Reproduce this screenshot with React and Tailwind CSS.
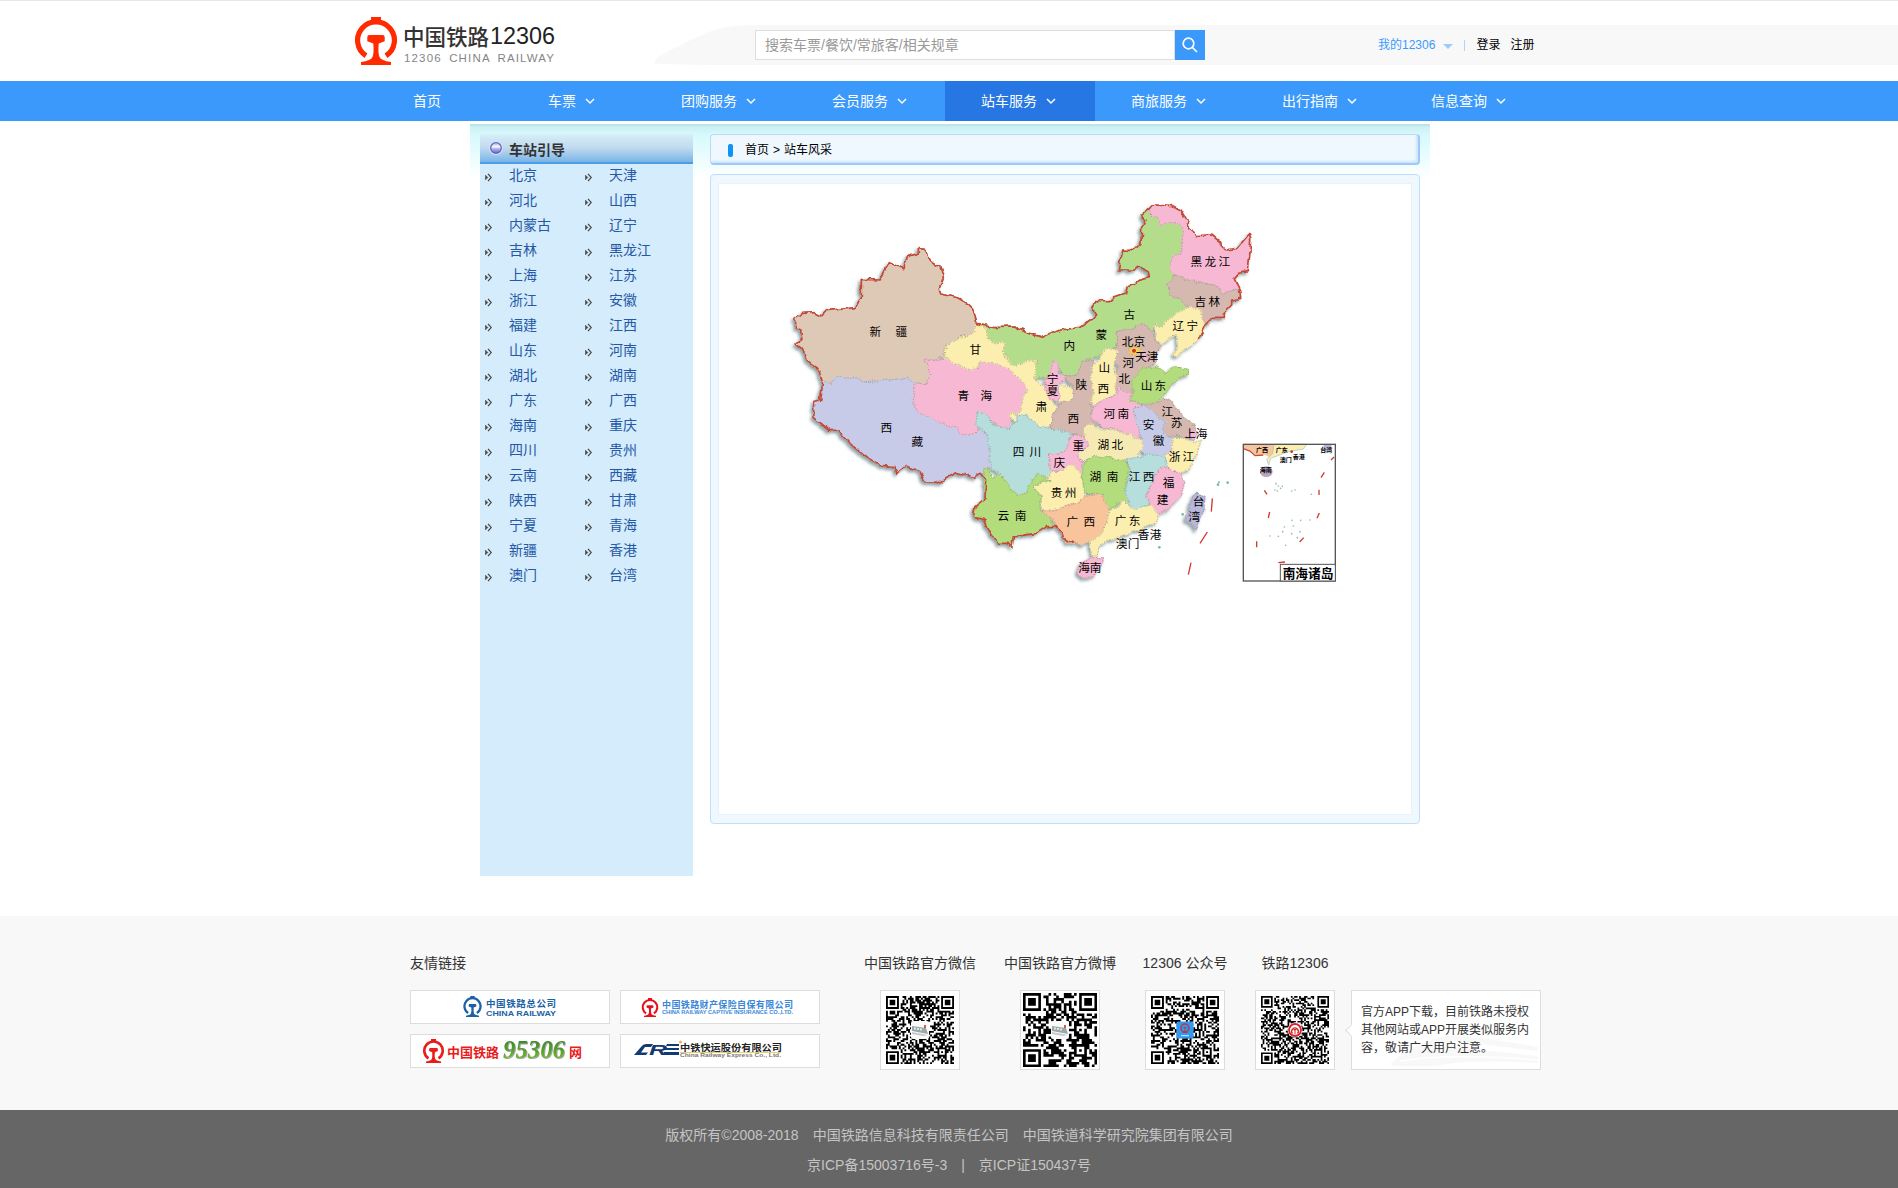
import React from "react";

const FONT = "font-['Liberation_Sans','Noto_Sans_CJK_SC',sans-serif]";

function Emblem({ className, color }) {
  return (
    <svg viewBox="0 0 42 48" className={className} fill={color}>
      <rect x="16" y="0" width="10" height="6" />
      <path d="M11 38.8 A18.4 18.4 0 1 1 31 38.8" fill="none" stroke={color} strokeWidth="5.2" />
      <path d="M14.5 18h13q2.2 0 2.2 2.2v4l-6 2.3q-.8 10 .8 13.5 1.500 3.500 11.500 5v3H6v-3q10-1.500 11.500-5 1.600-3.500.8-13.500l-6-2.300v-4q0-2.200 2.200-2.200z" />
    </svg>
  );
}

function Chevron() {
  return (
    <svg viewBox="0 0 10 7" className="ml-[9px] h-[7px] w-[10px]" fill="none" stroke="#fff" strokeWidth="1.5">
      <path d="M1 1l4 4 4-4" />
    </svg>
  );
}

const NAV = [
  { label: "首页", pad: "pl-[68px]", plain: true },
  { label: "车票", pad: "pl-[53px]" },
  { label: "团购服务", pad: "pl-[36px]" },
  { label: "会员服务", pad: "pl-[37px]" },
  { label: "站车服务", pad: "pl-[36px]", active: true },
  { label: "商旅服务", pad: "pl-[36px]" },
  { label: "出行指南", pad: "pl-[37px]" },
  { label: "信息查询", pad: "pl-[36px]" },
];

function Header() {
  return (
    <header>
      <div className="flex h-[81px] items-start border-t border-[#e7e7e7] pl-[355px]">
        <div className="mt-[16px] flex h-[48px] w-[300px] shrink-0">
          <Emblem className="h-[48px] w-[42px]" color="#ff2a00" />
          <svg viewBox="0 0 152 48" className="ml-[6px] h-[48px] w-[152px]">
            <text x="0" y="27.500" fontSize="21.500" fontWeight="500" fill="#333" textLength="86" fontFamily="'Noto Sans CJK SC',sans-serif">中国铁路</text>
            <text x="87" y="27" fontSize="24" fill="#222" textLength="65" lengthAdjust="spacingAndGlyphs" fontFamily="'Liberation Sans',sans-serif">12306</text>
            <text x="1" y="44.500" fontSize="11.500" fill="#858585" wordSpacing="3" textLength="150" fontFamily="'Liberation Sans',sans-serif">12306 CHINA RAILWAY</text>
          </svg>
        </div>
        <div className="mt-[24px] flex h-[40px] flex-1 items-center">
          <svg viewBox="0 0 100 40" className="h-[40px] w-[100px] shrink-0">
            <path d="M0 39V36Q0 33 8 29L42 12Q65 0 95 0H100V40H60Z" fill="#f8f8f8" />
          </svg>
          <div className="flex h-full flex-1 items-center bg-[#f8f8f8]">
            <div className="flex h-[30px] w-[420px] items-center border border-[#dedede] bg-white pl-[9px] text-[14px] text-[#999]">
              搜索车票/餐饮/常旅客/相关规章
            </div>
            <div className="flex h-[30px] w-[30px] items-center justify-center bg-[#3b99fc]">
              <svg viewBox="0 0 16 16" className="h-[16px] w-[16px]" fill="none" stroke="#fff" strokeWidth="1.700">
                <circle cx="6.500" cy="6.500" r="5.300" />
                <path d="M10.300 10.300L15 15" />
              </svg>
            </div>
            <div className="ml-[173px] flex items-center text-[12px] leading-[18px] text-black">
              <span className="text-[#3b99fc]">我的12306</span>
              <span className="mt-[3px] ml-[8px] h-0 w-0 border-x-[5px] border-t-[5px] border-x-transparent border-t-[#9dcbfb]" />
              <span className="ml-[11px] h-[11px] w-[1px] bg-[#b5d3f5]" />
              <span className="ml-[11px]">登录</span>
              <span className="ml-[10px]">注册</span>
            </div>
          </div>
        </div>
      </div>
      <nav className="flex h-[40px] bg-[#3b99fc] pl-[345px] text-[14px] text-white">
        {NAV.map((n) => (
          <div key={n.label} className={`flex h-full w-[150px] items-center ${n.pad} ${n.active ? "bg-[#2676e3]" : ""}`}>
            {n.label}
            {!n.plain && <Chevron />}
          </div>
        ))}
      </nav>
    </header>
  );
}

const PROVINCES = [
  ["北京", "天津"], ["河北", "山西"], ["内蒙古", "辽宁"], ["吉林", "黑龙江"], ["上海", "江苏"], ["浙江", "安徽"],
  ["福建", "江西"], ["山东", "河南"], ["湖北", "湖南"], ["广东", "广西"], ["海南", "重庆"], ["四川", "贵州"],
  ["云南", "西藏"], ["陕西", "甘肃"], ["宁夏", "青海"], ["新疆", "香港"], ["澳门", "台湾"],
];

function Bullet() {
  return (
    <svg viewBox="0 0 7 9" className="mt-[3px] mr-[17px] h-[9px] w-[7px]" fill="none" stroke="#444" strokeWidth="1.200">
      <path d="M3 .8L6.300 4.500L3 8.200" />
      <path d="M.5 2.200L2.800 4.500L.5 6.800z" fill="#444" strokeWidth=".6" />
    </svg>
  );
}

function Sidebar() {
  return (
    <aside className="h-[742px] w-[213px] bg-[#d4ecfc]">
      <div className="flex h-[30px] items-center border-b-2 border-[#4c9fe6] bg-linear-to-b from-[#d7eff8] via-[#c0d9ee] to-[#78b5e8] pl-[9px]">
        <svg viewBox="0 0 14 14" className="h-[14px] w-[14px]">
          <defs>
            <linearGradient id="orb" x1="0" y1="0" x2="0" y2="1">
              <stop offset="0" stopColor="#a9aee0" />
              <stop offset=".4" stopColor="#fff" />
              <stop offset=".55" stopColor="#b5baf0" />
              <stop offset="1" stopColor="#5a66cc" />
            </linearGradient>
          </defs>
          <circle cx="7" cy="7" r="6.900" fill="#dfe3f7" />
          <circle cx="7" cy="7" r="5.300" fill="url(#orb)" stroke="#5f69bb" strokeWidth="1.300" />
        </svg>
        <span className="mt-[4px] ml-[6px] text-[14px] leading-[20px] font-bold text-[#333]">车站引导</span>
      </div>
      <div className="-mt-[1px]">
        {PROVINCES.map((r) => (
          <div key={r[0]} className="flex h-[25px] items-center pl-[5px] text-[14px] leading-[25px] text-[#2558a5]">
            <div className="flex w-[100px] items-center"><Bullet />{r[0]}</div>
            <div className="flex items-center"><Bullet />{r[1]}</div>
          </div>
        ))}
      </div>
    </aside>
  );
}

const YELLOW = "#fbeeae";
const PINK = "#f7b8d3";
const GREEN = "#b3dd7c";
const BROWN = "#d5b9b0";
const LILAC = "#c8cbe8";
const TEAL = "#b5dedd";

/* Regions are grouped by the offset of the sheet they belong to. */
const SHEETS = [
  {
    at: "translate(0 0)",
    shapes: [
      ["#dec9b6", "415,176 438,178 442,200 452,215 480,230 490,262 478,298 482,312 530,322 565,342 578,355 592,400 585,425 545,440 520,460 500,462 490,500 435,512 450,550 440,585 400,580 385,565 340,568 310,572 245,575 235,560 200,565 170,560 155,580 125,578 116,540 82,515 70,480 48,462 65,445 62,420 46,412 48,385 68,370 105,368 125,378 140,362 228,353 244,322 244,268 300,270 328,218 368,236 382,200 415,190"],
      [LILAC, "128,578 155,580 170,560 200,565 235,560 245,575 310,572 340,568 385,565 405,583 400,640 410,665 450,680 485,700 530,710 545,735 570,738 605,718 625,750 630,830 605,850 580,862 530,847 470,880 435,878 420,845 378,828 350,850 345,830 300,826 250,795 215,765 175,720 150,722 102,682 100,635 122,630"],
      ["#b4dd8b", "592,400 640,410 700,408 740,428 790,442 840,420 900,412 930,390 950,375 935,350 945,335 990,335 1005,320 1040,308 1045,290 1080,270 1108,262 1105,245 1070,228 1060,240 1015,240 1028,180 1060,182 1083,160 1085,120 1098,90 1083,75 1105,55 1125,80 1148,105 1180,95 1210,110 1204,190 1184,200 1167,232 1190,250 1160,285 1175,320 1212,330 1215,355 1180,382 1145,408 1125,405 1110,430 1085,405 1065,412 1012,422 1008,470 980,477 950,500 910,512 880,565 855,565 835,525 810,555 758,570 770,515 700,530 670,490 675,462 640,465 622,440"],
      [PINK, "435,512 505,505 530,525 590,535 605,512 650,520 720,560 740,600 725,655 715,680 690,668 690,715 660,710 640,695 608,670 598,700 590,730 545,738 530,712 485,700 410,665 400,630 402,585 440,583 450,550"],
      [YELLOW, "592,402 615,415 622,445 640,465 672,462 670,495 700,530 765,512 770,540 760,565 790,590 800,605 815,635 832,650 835,690 815,700 800,718 780,715 740,680 715,702 704,690 690,680 690,668 715,677 740,600 720,560 650,520 605,512 580,540 530,525 495,500 500,465 545,445 585,425"],
    ],
  },
  {
    at: "translate(780 0)",
    shapes: [
      [PINK, "325,55 345,42 395,47 420,60 435,85 468,137 515,135 545,160 555,180 590,175 628,132 632,150 625,245 595,250 582,265 598,300 580,300 550,310 520,285 470,275 405,255 385,232 400,200 425,190 428,110 400,95 368,105 345,80 330,80"],
      [BROWN, "408,255 470,278 520,288 550,310 598,298 602,325 575,330 575,345 550,370 550,385 515,385 505,405 480,385 480,365 455,350 430,345 420,325 395,320 380,285"],
      [YELLOW, "345,400 365,410 400,380 435,355 455,350 480,365 495,405 475,450 440,475 410,500 398,495 415,470 405,430 365,462 350,450"],
      [BROWN, "230,425 285,412 305,400 322,410 340,430 345,455 365,465 350,490 345,520 318,535 300,560 275,600 270,610 230,600 225,555 240,535 225,510 230,470"],
    ],
  },
  {
    at: "translate(510 420)",
    shapes: [
      [YELLOW, "325,170 350,163 372,180 372,205 350,225 325,215"],
      [BROWN, "345,140 375,140 400,95 430,90 425,215 420,235 425,255 440,285 405,290 400,320 360,310 305,292 305,262 330,222 370,208 375,180"],
      [YELLOW, "425,215 430,110 455,70 475,55 505,65 490,115 500,150 495,195 460,210 430,230"],
      [PINK, "310,95 325,100 325,130 345,145 330,165 325,215 300,210 290,190 285,155 300,130"],
      [PINK, "425,235 460,210 500,195 505,175 540,190 540,215 578,225 550,250 560,280 575,300 565,325 530,315 500,295 455,295 430,260"],
      [GREEN, "545,150 580,115 620,110 645,130 670,110 715,118 715,130 690,135 650,185 615,220 580,220 540,215 550,185"],
      [BROWN, "570,220 615,220 640,205 670,220 700,260 735,285 740,300 710,320 670,315 640,310 640,280 620,260 600,235"],
      [LILAC, "550,240 580,225 615,245 625,265 645,275 640,310 672,325 665,360 640,375 590,375 565,350 575,325 560,285"],
      [PINK, "708,312 735,298 742,310 728,328"],
      [YELLOW, "670,325 705,325 730,340 755,330 740,370 730,400 700,430 660,430 640,400 645,375 665,360"],
      [TEAL, "85,250 105,250 130,285 180,300 205,260 225,250 240,270 270,290 305,295 360,310 370,330 345,365 310,375 295,400 310,430 305,450 260,430 240,470 225,490 200,500 180,470 150,430 120,420 120,350 105,305 80,290"],
      ["#f5eab4", "405,290 430,280 440,300 500,300 530,315 565,325 580,350 560,385 520,390 440,378 405,395 380,390 385,365 410,345 400,320"],
      [PINK, "365,320 400,320 420,345 385,365 380,380 395,400 395,430 370,405 340,415 300,420 300,395 295,375 345,365"],
      [YELLOW, "300,430 340,415 370,405 400,440 405,495 380,520 330,535 285,545 265,520 270,495 250,480 255,465 290,455"],
      [GREEN, "400,400 440,378 520,390 535,420 525,470 540,520 500,520 480,540 455,520 460,490 405,490 395,430"],
      [TEAL, "530,390 590,375 640,375 652,410 620,428 610,450 590,490 595,520 555,545 535,520 530,470 540,420"],
      [PINK, "620,425 640,410 690,430 705,455 690,500 650,540 625,555 600,525 590,500 610,455"],
      [GREEN, "105,415 130,440 150,430 180,470 200,500 225,490 240,465 265,430 300,450 250,465 255,480 270,500 270,540 300,565 315,590 290,590 260,610 190,620 185,655 175,640 145,640 110,590 100,565 70,560 75,530 105,505 100,450"],
      ["#f8c49c", "275,545 330,535 380,520 405,500 455,490 480,545 460,600 440,625 395,645 355,640 335,610 315,590 315,570"],
      [YELLOW, "480,545 520,515 555,542 600,525 625,555 615,580 560,600 500,625 450,640 440,685 425,670 420,635 440,625 465,595"],
      [PINK, "382,728 392,700 425,683 460,683 458,702 428,738 400,748"],
      ["#b9b7da", "740,490 765,500 760,550 735,600 712,570 720,520"],
      ["#f7cf62", "540,52 562,50 570,66 554,76 538,68"],
      [PINK, "575,70 590,72 592,92 578,90"],
    ],
  },
];

const BORDER =
  "M1255 450L1275 405 1295 385 1330 385 1330 370 1355 345 1355 330 1382 325 1378 298 1362 265 1375 250 1405 245 1412 150 1408 132 1370 175 1335 180 1325 160 1295 135 1248 137 1215 85 1200 60 1175 47 1125 42 1105 55 1083 75 1098 90 1085 120 1083 160 1060 182 1028 180 1015 240 1060 240 1070 228 1105 245 1108 262 1080 270 1045 290 1040 308 1005 320 990 335 945 335 935 350 950 375 930 390 900 412 840 420 790 442 740 428 700 408 640 410 592 400 578 355 565 342 530 322 482 312 478 298 490 262 480 230 452 215 442 200 438 178 415 176 415 190 382 200 368 236 328 218 300 270 244 268 244 322 228 353 140 362 125 378 105 368 68 370 48 385 46 412 62 420 65 445 48 462 70 480 82 515 116 540 128 578 122 630 100 635 102 682 150 722 175 720 215 765 250 795 300 826 345 830 350 850 378 828 420 845 435 878 470 880 530 847 580 862 600 850 617 870 615 925 585 950 580 980 610 985 620 1010 655 1060 685 1060 695 1075 700 1040 770 1030 800 1010 825 1010 845 1030 850 1045 880 1060";

/* Each glyph is centred on its own point. */
const GLYPHS = [
  ["新", 286, 425], ["疆", 364, 425], ["甘", 586, 480], ["青", 550, 618], ["海", 619, 618], ["西", 319, 713], ["藏", 412, 754],
  ["肃", 784, 650], ["宁", 818, 566], ["夏", 818, 602], ["四", 716, 785], ["川", 766, 785], ["庆", 838, 819], ["重", 895, 767],
  ["内", 868, 467], ["蒙", 964, 435], ["古", 1048, 375], ["黑", 1249, 216], ["龙", 1291, 216], ["江", 1333, 216],
  ["吉", 1261, 336], ["林", 1303, 336], ["辽", 1195, 407], ["宁", 1237, 407], ["北", 1043, 456], ["京", 1078, 456],
  ["天", 1083, 500], ["津", 1118, 500], ["河", 1045, 518], ["北", 1033, 567], ["山", 973, 533], ["西", 970, 596], ["陕", 904, 583],
  ["山", 1100, 587], ["东", 1141, 587], ["西", 880, 686], ["河", 988, 671], ["南", 1030, 671], ["安", 1106, 704], ["徽", 1136, 753],
  ["江", 1162, 666], ["苏", 1190, 699], ["上", 1230, 730], ["海", 1265, 730], ["湖", 970, 765], ["北", 1012, 765],
  ["浙", 1184, 801], ["江", 1225, 801], ["湖", 946, 861], ["南", 998, 861], ["江", 1064, 861], ["西", 1106, 861],
  ["福", 1166, 878], ["建", 1148, 930], ["贵", 830, 908], ["州", 872, 908], ["云", 670, 978], ["南", 722, 978],
  ["广", 877, 995], ["西", 928, 995], ["广", 1022, 992], ["东", 1064, 992], ["香", 1091, 1035], ["港", 1127, 1035],
  ["澳", 1025, 1062], ["门", 1061, 1062], ["海", 912, 1134], ["南", 947, 1134], ["台", 1256, 936], ["湾", 1243, 981],
];

const DASHES = "M1297 925l-3 40M1282 1026l-22 34M1233 1118l-8 36";
const INSET_DASHES =
  "M272 38l-9 9M243 84l-10 16M227 136l0 16M228 206l-7 16M181 280l-12 13M125 353l-20 2M40 291l0 18M79 203l-4 18M63 138l8 12";
const DOTS = [[98, 118], [105, 125], [112, 132], [95, 137], [102, 140], [145, 140], [155, 137], [204, 150], [117, 126], [146, 228], [172, 228], [200, 227], [123, 248], [150, 245], [118, 262], [145, 268], [80, 275], [105, 276], [127, 303], [170, 262], [162, 280]];

function ChinaMap() {
  return (
    <svg viewBox="0 0 1710 1200" className="h-[400px] w-[570px]" fontFamily="'Noto Sans CJK SC',sans-serif">
      <defs>
        <filter id="rough" x="0" y="0" width="1710" height="1200" filterUnits="userSpaceOnUse">
          <feTurbulence type="fractalNoise" baseFrequency="0.04" numOctaves="2" seed="4" result="n" />
          <feDisplacementMap in="SourceGraphic" in2="n" scale="18" xChannelSelector="R" yChannelSelector="G" result="d" />
          <feDropShadow in="d" dx="-6" dy="7" stdDeviation="4" floodColor="#4a6a70" floodOpacity=".6" />
        </filter>
      </defs>
      <g filter="url(#rough)">
        {SHEETS.map((s) => (
          <g key={s.at} transform={s.at}>
            {s.shapes.map(([fill, pts]) => (
              <g key={pts}>
                <polygon points={pts} fill={fill} stroke={fill} strokeWidth="4" strokeLinejoin="round" />
                <polygon points={pts} fill="none" stroke="#8b8b80" strokeOpacity=".75" strokeWidth="2.500" strokeDasharray="4 4" />
              </g>
            ))}
          </g>
        ))}
        <path d={BORDER} fill="none" stroke="#c24a38" strokeWidth="5" strokeLinejoin="round" />
      </g>
      <circle cx="1062" cy="482" r="6" fill="#c8352a" />
      <path d={DASHES} stroke="#d33a30" strokeWidth="4" />
      <g fill="#7fb5b0">
        <circle cx="1314" cy="884" r="4" /><circle cx="1317" cy="877" r="3" /><circle cx="1343" cy="878" r="4" />
        <circle cx="1208" cy="973" r="4" /><circle cx="1138" cy="1072" r="4" />
      </g>
      <g fontSize="35" textAnchor="middle" fill="#000">
        {GLYPHS.map(([c, x, y]) => (
          <text key={`${c}${x}-${y}`} x={x} y={y + 13}>{c}</text>
        ))}
      </g>
      <g transform="translate(1390 763)">
        <rect width="276" height="410" fill="#fff" />
        <path d="M0 0H118L92 28 78 38 60 30 35 33 20 18 0 12Z" fill="#f8c49c" />
        <path d="M0 13L20 20 35 34 60 32" fill="none" stroke="#c24a38" strokeWidth="4" />
        <path d="M92 0H190L180 14 135 22 82 42 76 62 70 44 88 28Z" fill={YELLOW} stroke="#9bc4c0" strokeWidth="2" />
        <ellipse cx="69" cy="82" rx="19" ry="16" fill="#b9a7bd" />
        <path d="M240 0h26l-8 26-14-4z" fill="#b9b7da" />
        <path d={INSET_DASHES} stroke="#d33a30" strokeWidth="4" />
        {DOTS.map(([x, y]) => <circle key={`${x}-${y}`} cx={x} cy={y} r="2.500" fill="#8fb8bd" />)}
        <g fontSize="18" fontWeight="700" textAnchor="middle">
          <text x="56" y="22">广西</text>
          <text x="115" y="22">广东</text>
          <text x="249" y="22">台湾</text>
          <text x="127" y="53">澳门</text>
          <text x="166" y="44">香港</text>
          <text x="67" y="84">海南</text>
        </g>
        <circle cx="145" cy="22" r="4" fill="#c8352a" />
        <rect x="0" y="0" width="276" height="410" fill="none" stroke="#555" strokeWidth="4" />
        <rect x="111" y="360" width="165" height="50" fill="#fff" stroke="#555" strokeWidth="3" />
        <text x="194" y="400" fontSize="38" fontWeight="700" textAnchor="middle" textLength="152">南海诸岛</text>
      </g>
    </svg>
  );
}

function Main() {
  return (
    <main className="mt-[3px] ml-[470px] flex h-[792px] w-[960px] bg-[linear-gradient(#b8dfe3,#cceff4_3px,#d5f9fd_10px,#ffffff_54px)] pt-[10px] pl-[10px]">
      <Sidebar />
      <div className="ml-[17px] w-[710px]">
        <div className="flex h-[31px] items-center rounded-[4px] border border-r-2 border-b-2 border-[#b9dcfb] border-r-[#9bcafa] border-b-[#9bcafa] bg-[#f0f8ff] pl-[17px] text-[12px] leading-[18px] text-black shadow-[inset_-2px_-2px_2px_#cfe5fb]">
          <span className="mt-[2px] h-[13px] w-[5px] rounded-[2px] bg-[#0d94f5]" />
          <span className="mt-[2px] ml-[12px] flex gap-[4px]">
            <span>首页</span>
            <span>&gt;</span>
            <span>站车风采</span>
          </span>
        </div>
        <div className="mt-[9px] h-[650px] rounded-[4px] border border-[#bfdffc] bg-[#f0f8ff] px-[7px] py-[8px]">
          <div className="h-[632px] border border-[#e6f3fd] bg-white pt-[6px] pl-[61px]">
            <ChinaMap />
          </div>
        </div>
      </div>
    </main>
  );
}

function finderAt(x, y, n) {
  const corners = [[0, 0], [n - 7, 0], [0, n - 7]];
  for (const [cx, cy] of corners) {
    const dx = x - cx;
    const dy = y - cy;
    if (dx >= -1 && dx <= 7 && dy >= -1 && dy <= 7) {
      const ring = Math.max(Math.abs(dx - 3), Math.abs(dy - 3));
      return ring === 3 || ring <= 1;
    }
  }
  const a = Math.max(Math.abs(x - (n - 7)), Math.abs(y - (n - 7)));
  if (a <= 2) return a !== 1;
  return null;
}

function modulePath(n, seed) {
  let s = seed;
  let d = "";
  for (let y = 0; y < n; y++) {
    for (let x = 0; x < n; x++) {
      s = (s * 1103515245 + 12345) % 2147483648;
      const f = finderAt(x, y, n);
      if (f === null ? (s >> 12) % 100 < 52 : f) d += `M${x} ${y}h1.03v1.03h-1.03z`;
    }
  }
  return d;
}

function QrCode({ n, seed, big, badge }) {
  return (
    <div className="flex h-[80px] w-[80px] items-center justify-center border border-[#ddd] bg-white">
      <svg viewBox={`0 0 ${n} ${n}`} className={big ? "h-[74px] w-[74px]" : "h-[68px] w-[68px]"}>
        <path d={modulePath(n, seed)} fill="#000" />
        <g transform={`translate(${n / 2} ${n / 2}) scale(${n / (big ? 74 : 68)})`}>
          {badge === "train" && (
            <g>
              <rect x="-9" y="-9" width="18" height="18" rx="2" fill="#fbfbfb" />
              <path d="M-8 -4L6 -2 8 4 -8 1z" fill="#9aa9a7" />
              <path d="M-8 2L8 5 3 6 -8 4z" fill="#c4cacd" />
              <path d="M-6 -2.500h2v2h-2zM-3 -2h2v2h-2zM0 -1.500h2v2h-2z" fill="#dfe8e8" />
              <rect x="4" y="-5" width="2" height="3" fill="#d8545a" />
            </g>
          )}
          {badge === "app" && (
            <g>
              <rect x="-8.500" y="-8.500" width="17" height="17" rx="1.500" fill="#2f9af0" />
              <circle cx="0" cy="-2" r="4" fill="none" stroke="#b5374a" strokeWidth="1.500" />
              <path d="M-1.500 -3h3v1h-1v4h2v1h-5v-1h2v-4h-1z" fill="#b5374a" />
              <rect x="-4" y="5" width="8" height="1.200" fill="#bfe0fb" />
            </g>
          )}
          {badge === "round" && (
            <g>
              <circle r="7.500" fill="#fff" />
              <circle r="6" fill="none" stroke="#d8242b" strokeWidth="1.800" />
              <path d="M-2.500 3.500A3.300 3.300 0 1 1 2.500 3.500" fill="none" stroke="#d8242b" strokeWidth="1.300" />
              <path d="M-1.500 -1h3v1.200h-1v4h-1v-4h-1z" fill="#d8242b" />
            </g>
          )}
        </g>
      </svg>
    </div>
  );
}

function LinkBox({ children }) {
  return <div className="flex h-[34px] w-[200px] items-start border border-[#ddd] bg-white">{children}</div>;
}

function FriendLinks() {
  const cjk = "'Noto Sans CJK SC',sans-serif";
  const latin = "'Liberation Sans',sans-serif";
  return (
    <div className="grid w-[410px] grid-cols-[200px_200px] gap-[10px]">
      <LinkBox>
        <Emblem className="mt-[5px] ml-[52px] h-[21px] w-[19px]" color="#1b62a5" />
        <svg viewBox="0 0 72 32" className="ml-[4px] h-[32px] w-[72px]" fill="#1b62a5" fontWeight="700">
          <text x="0" y="15.500" fontSize="9.500" textLength="70" fontFamily={cjk}>中国铁路总公司</text>
          <text x="0" y="25" fontSize="7.500" textLength="70" lengthAdjust="spacingAndGlyphs" fontFamily={latin}>CHINA RAILWAY</text>
        </svg>
      </LinkBox>
      <LinkBox>
        <Emblem className="mt-[7px] ml-[20px] h-[19px] w-[18px]" color="#e60f1e" />
        <svg viewBox="0 0 134 32" className="ml-[3px] h-[32px] w-[134px]" fill="#3a86d8" fontWeight="700">
          <text x="0" y="16.500" fontSize="9" textLength="131" fontFamily={cjk}>中国铁路财产保险自保有限公司</text>
          <text x="0" y="22.500" fontSize="4.500" textLength="131" lengthAdjust="spacingAndGlyphs" fontFamily={latin}>CHINA RAILWAY CAPTIVE INSURANCE CO.,LTD.</text>
        </svg>
      </LinkBox>
      <LinkBox>
        <Emblem className="mt-[4px] ml-[12px] h-[24px] w-[21px]" color="#ea1c1c" />
        <svg viewBox="0 0 140 32" className="ml-[3px] h-[32px] w-[140px]" fontWeight="700">
          <defs>
            <linearGradient id="leaf" x1="0" y1="0" x2="0" y2="1">
              <stop offset="0" stopColor="#2f7d2c" />
              <stop offset="1" stopColor="#7cc02e" />
            </linearGradient>
          </defs>
          <text x="0" y="22" fontSize="13" fill="#ea1c1c" textLength="52" fontFamily={cjk}>中国铁路</text>
          <text x="56" y="23" fontSize="25" fontStyle="italic" fill="url(#leaf)" textLength="62" lengthAdjust="spacingAndGlyphs" fontFamily="'Liberation Serif',serif" className="drop-shadow-[1px_1px_0.5px_rgba(0,0,0,0.35)]">95306</text>
          <text x="122" y="22" fontSize="13" fill="#ea1c1c" fontFamily={cjk}>网</text>
        </svg>
      </LinkBox>
      <LinkBox>
        <svg viewBox="0 0 180 32" className="ml-[12px] h-[32px] w-[180px]">
          <path d="M20 9H13Q10 9 8 12L1 20H13L15 17.500H8L12 12H18Z" fill="#123a75" />
          <text x="16" y="20" fontSize="15" fontWeight="700" fontStyle="italic" fill="#123a75" textLength="18" lengthAdjust="spacingAndGlyphs" fontFamily={latin}>R</text>
          <path d="M34 9H46V11H33zM32 13H46V15H31zM31 17H46V20H30z" fill="#123a75" />
          <circle cx="47.500" cy="7" r="1.500" fill="#f0ab55" />
          <text x="47" y="15.500" fontSize="9" fontWeight="700" fill="#222" textLength="102" lengthAdjust="spacingAndGlyphs" fontFamily={cjk}>中铁快运股份有限公司</text>
          <path d="M47 17.500H148" stroke="#e2c24d" strokeWidth=".8" />
          <text x="47" y="22" fontSize="5" fontWeight="700" fill="#777" textLength="101" lengthAdjust="spacingAndGlyphs" fontFamily={latin}>China Railway Express Co., Ltd.</text>
        </svg>
      </LinkBox>
    </div>
  );
}

const CODES = [
  { title: "中国铁路官方微信", n: 37, seed: 7, badge: "train", cell: "w-[112px] ml-[44px]" },
  { title: "中国铁路官方微博", n: 29, seed: 23, badge: "train", big: true, cell: "w-[112px] ml-[28px]" },
  { title: "12306 公众号", n: 37, seed: 91, badge: "app", cell: "w-[86px] ml-[26px]" },
  { title: "铁路12306", n: 41, seed: 133, badge: "round", cell: "w-[80px] ml-[27px]" },
];

function Footer() {
  return (
    <footer>
      <div className="flex h-[194px] bg-[#f8f8f8] pt-[37px] pl-[410px] text-[14px] leading-[20px] text-[#333]">
        <div className="w-[410px]">
          <div className="mb-[17px]">友情链接</div>
          <FriendLinks />
        </div>
        {CODES.map((c) => (
          <div key={c.title} className={`flex flex-col items-center whitespace-nowrap ${c.cell}`}>
            <div className="mb-[17px]">{c.title}</div>
            <QrCode n={c.n} seed={c.seed} big={c.big} badge={c.badge} />
          </div>
        ))}
        <div className="relative mt-[37px] ml-[16px] h-[80px] w-[190px] border border-[#ddd] bg-white pt-[12px] pl-[9px] text-[12px] leading-[18px]">
          <span className="absolute top-[35px] -left-[5px] h-[9px] w-[9px] rotate-45 border-b border-l border-[#ddd] bg-white" />
          <svg viewBox="0 0 150 40" className="absolute right-0 bottom-0 h-[40px] w-[150px]">
            <path d="M0 35Q15 20 50 8Q70 4 148 18V34Q80 30 45 37H5Z" fill="#f8f8f8" />
            <path d="M62 12L148 22V27L64 18Z" fill="#fff" />
            <path d="M10 32Q60 24 148 31" fill="none" stroke="#fff" strokeWidth="1.500" />
          </svg>
          <div className="relative">官方APP下载，目前铁路未授权<br />其他网站或APP开展类似服务内<br />容，敬请广大用户注意。</div>
        </div>
      </div>
      <div className="flex h-[78px] flex-col items-center bg-[#666] pt-[10px] text-[14px] leading-[30px] text-[#c4c4c4]">
        <div className="flex gap-[14px]">
          <span>版权所有©2008-2018</span>
          <span>中国铁路信息科技有限责任公司</span>
          <span>中国铁道科学研究院集团有限公司</span>
        </div>
        <div className="flex gap-[14px]">
          <span>京ICP备15003716号-3</span>
          <span>|</span>
          <span>京ICP证150437号</span>
        </div>
      </div>
    </footer>
  );
}

export default function App() {
  return (
    <div className={`h-[1188px] w-[1898px] overflow-hidden bg-white ${FONT}`}>
      <Header />
      <Main />
      <Footer />
    </div>
  );
}
